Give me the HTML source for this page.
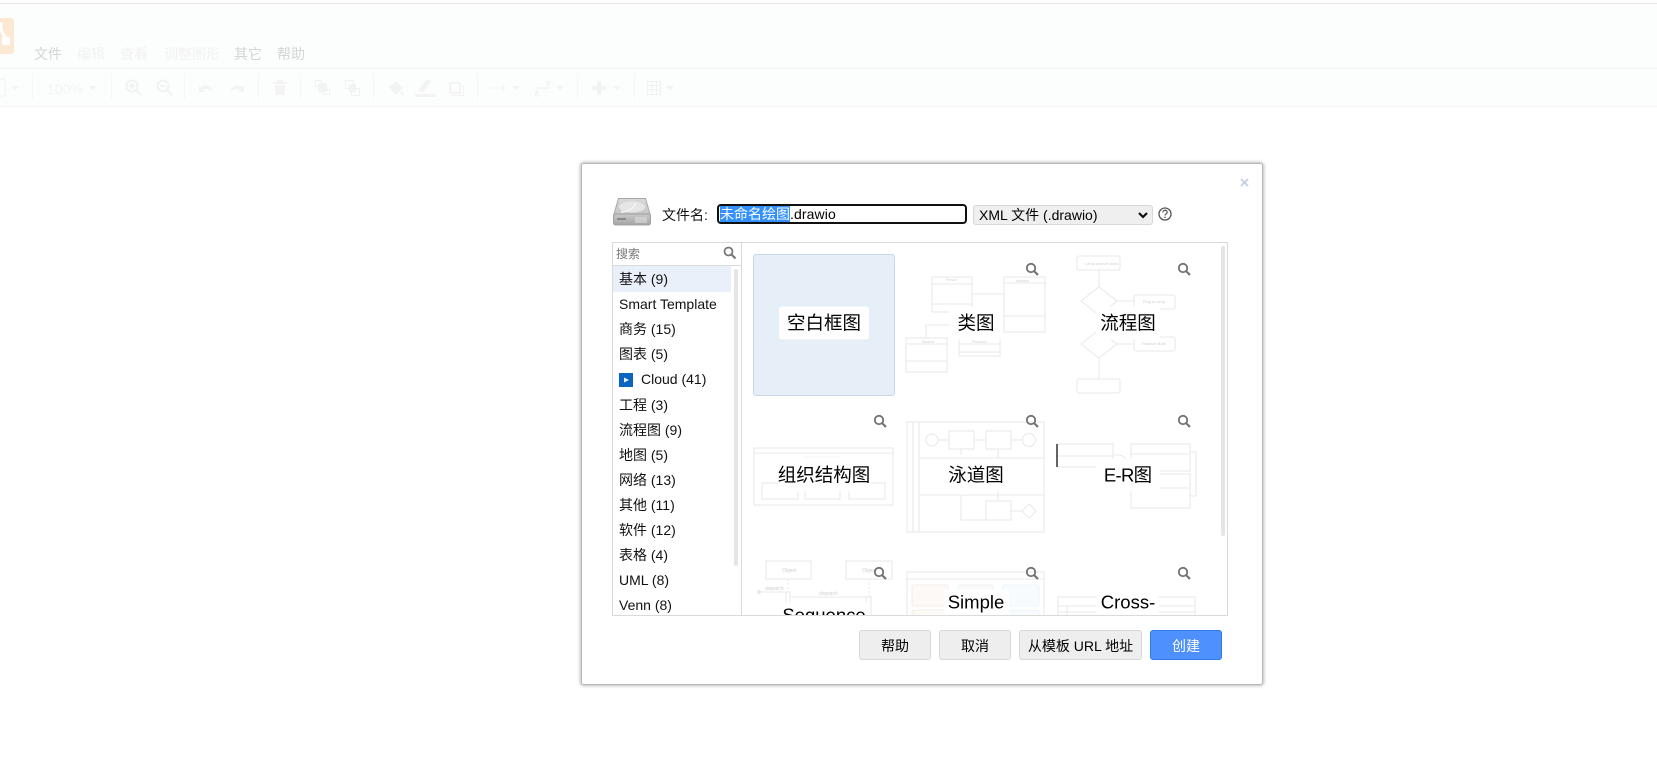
<!DOCTYPE html>
<html><head><meta charset="utf-8"><style>
*{box-sizing:border-box}
html,body{margin:0;padding:0;width:1657px;height:772px;overflow:hidden;background:#fff;font-family:"Liberation Sans","Noto Sans CJK SC",sans-serif;color:#000}
.a{position:absolute;white-space:nowrap}
.m{top:45px;font-size:14px;line-height:18px}
.sep{position:absolute;top:74px;width:1px;height:26px;background:#f6f7f6}
.r{position:absolute;left:619px;font-size:14px;line-height:20px;white-space:nowrap;color:#111}
.l{position:absolute;transform:translate(-50%,-50%);font-size:18.5px;line-height:25px;padding:4px 8px;background:#fff;border-radius:3px;white-space:nowrap;text-align:center}
.b{position:absolute;top:630px;height:30px;background:#eee;border:1px solid #d8d8d8;border-radius:3px;font-size:14px;line-height:30px;text-align:center;white-space:nowrap}
svg{position:absolute;overflow:visible}
</style></head><body>
<div class="a" style="left:0;top:3px;width:1657px;height:1px;background:#e8e8e8"></div>
<div class="a" style="left:0;top:4px;width:1657px;height:102px;background:#fcfefd"></div>
<div class="a" style="left:0;top:68px;width:1657px;height:1px;background:#f4f5f4"></div>
<div class="a" style="left:0;top:106px;width:1657px;height:1px;background:#f4f5f4"></div>
<svg style="left:0;top:0" width="20" height="60"><rect x="-8" y="18" width="22" height="36" rx="3" fill="#fde8d4"/><path d="M-1 24h2v6l5 9" stroke="#fff" stroke-width="3" fill="none"/><rect x="2" y="37" width="8" height="8" rx="1.500" fill="#fff"/></svg>
<div class="a m" style="left:34px;color:#d4d4d4">文件</div>
<div class="a m" style="left:77px;color:#f1f1f1">编辑</div>
<div class="a m" style="left:120px;color:#f1f1f1">查看</div>
<div class="a m" style="left:164px;color:#f1f1f1">调整图形</div>
<div class="a m" style="left:234px;color:#d4d4d4">其它</div>
<div class="a m" style="left:277px;color:#d4d4d4">帮助</div>
<div class="sep" style="left:32px"></div><div class="sep" style="left:111px"></div><div class="sep" style="left:184px"></div><div class="sep" style="left:258px"></div><div class="sep" style="left:300px"></div><div class="sep" style="left:373px"></div><div class="sep" style="left:477px"></div><div class="sep" style="left:577px"></div><div class="sep" style="left:634px"></div>
<div class="a" style="left:47px;top:80px;font-size:14px;line-height:18px;color:#f3f3f3">100%</div>
<svg style="left:0;top:68px" width="700" height="38" fill="#f2f3f2" stroke="none">
<rect x="-6" y="11" width="11" height="17" fill="none" stroke="#f0f0f0"/>
<path d="M11 18h8l-4 4zM89 18h8l-4 4zM512 18h8l-4 4zM556 18h8l-4 4zM613 18h8l-4 4zM666 18h8l-4 4z"/>
<g fill="none" stroke="#f1f2f1" stroke-width="2"><circle cx="132" cy="18" r="5.500"/><path d="M136 22l5 5M129 18h6M132 15v6"/><circle cx="163" cy="18" r="5.500"/><path d="M167 22l5 5M160 18h6"/></g>
<path d="M199 18v6h6l-2-2c3-2 7-1 10 2c-1-5-7-9-12-5zM244 18v6h-6l2-2c-3-2-7-1-10 2c1-5 7-9 12-5z"/>
<path d="M273 14h14v2h-14zM277 12h6v2h-6zM275 17h10v10h-10z"/>
<path d="M318 15h9v9h-9z"/><path d="M315.500 12.500h6v6h-6zM323.500 21.500h6v5h-6z" fill="none" stroke="#f0f1f0"/>
<path d="M345.500 12.500h8v8h-8zM351.500 20.500h8v7h-8z" fill="none" stroke="#f0f1f0"/><path d="M349 16h7v8h-7z"/>
<path d="M389 19l7-6l7 7l-7 7zM391 12l4 4M402 23c2 2 2 4 0 4c-2 0-2-2 0-4z"/>
<path d="M419 21l8-10l4 3l-8 10h-4zM415 26h21v3h-21z"/>
<path d="M449 14h12v12h-12zM451 16v8h8v-8zM463 17v10h-11v1h12v-11z"/>
<path d="M491 19.500h12v1h-12zM502 17l4 3l-4 3z"/>
<path d="M537 25v-5h11v-5" fill="none" stroke="#f0f1f0" stroke-width="1.200"/><rect x="535.500" y="25.500" width="2.500" height="2.500" fill="#fcfefd" stroke="#f0f1f0"/><rect x="547" y="13.500" width="2.500" height="2.500" fill="#fcfefd" stroke="#f0f1f0"/>
<path d="M597 13h4v5h5v4h-5v5h-4v-5h-5v-4h5z"/>
<g fill="none" stroke="#f0f1f0"><path d="M647.500 13.500h13v13h-13zM647.500 17.500h13M647.500 22h13M652 13.500v13M656.500 13.500v13"/></g>
</svg>

<!-- dialog -->
<div class="a" style="left:581px;top:163px;width:682px;height:522px;background:#fff;border:1px solid #b8b8b8;border-radius:3px;box-shadow:0 0 3px 1px rgba(0,0,0,.26)"></div>
<svg style="left:1240px;top:178px" width="9" height="9"><path d="M1 1l7 7M8 1l-7 7" stroke="#c3cfe3" stroke-width="1.800"/></svg>
<svg style="left:612px;top:197px" width="40" height="30"><defs><linearGradient id="g1" x1="0" y1="0" x2="0" y2="1"><stop offset="0" stop-color="#dadada"/><stop offset="1" stop-color="#c4c4c4"/></linearGradient><linearGradient id="g2" x1="0" y1="0" x2="0" y2="1"><stop offset="0" stop-color="#c9c9c9"/><stop offset="1" stop-color="#a4a4a4"/></linearGradient></defs>
<path d="M6.500 1.500h27l5 17H1.500z" fill="url(#g1)" stroke="#a8a8a8"/><ellipse cx="20" cy="10" rx="13" ry="5.500" fill="#e6e6e6"/><path d="M9 15c7 0 13-4 15-9" fill="none" stroke="#f4f4f4" stroke-width="1.500"/><rect x="1.500" y="17" width="37" height="11" rx="2" fill="url(#g2)" stroke="#a0a0a0"/><path d="M5 21h9v2H5z" fill="#8a8a8a"/><path d="M24 20v6M26 20v6M28 20v6M30 20v6M32 20v6M34 20v6" stroke="#e4e4e4"/></svg>
<div class="a" style="left:662px;top:206px;font-size:14px;line-height:18px;color:#111">文件名:</div>
<div class="a" style="left:717px;top:204px;width:250px;height:20px;border:2px solid #101010;border-radius:4px;background:#fff"></div>
<div class="a" style="left:720px;top:206px;height:16px;font-size:14px;line-height:16px"><span style="background:#3390ff;color:#fff;display:inline-block;height:16px">未命名绘图</span><span style="letter-spacing:.1px">.drawio</span></div>
<div class="a" style="left:973px;top:205px;width:180px;height:20px;background:#efefef;border:1px solid #d8d8d8;border-radius:3px;font-size:14px;line-height:18px;padding-left:5px">XML 文件 (.drawio)</div>
<svg style="left:1137px;top:211px" width="12" height="9"><path d="M2 2l4 4l4-4" fill="none" stroke="#111" stroke-width="2.200"/></svg>
<svg style="left:1157px;top:206px" width="16" height="16"><circle cx="8" cy="8" r="6" fill="none" stroke="#555" stroke-width="1.300"/><path d="M5.800 6.500c0-3 4.400-3 4.400-.2c0 1.700-2.200 1.600-2.200 3.200" fill="none" stroke="#555" stroke-width="1.200"/><circle cx="8" cy="11.300" r=".8" fill="#555"/></svg>

<!-- panel -->
<div class="a" style="left:612px;top:242px;width:616px;height:374px;border:1px solid #dadada;background:#fff"></div>
<div class="a" style="left:741px;top:243px;width:1px;height:372px;background:#dadada"></div>
<div class="a" style="left:613px;top:265px;width:128px;height:1px;background:#dadada"></div>
<div class="a" style="left:616px;top:246px;font-size:12px;line-height:16px;color:#777">搜索</div>
<svg style="left:723px;top:246px" width="14" height="14"><circle cx="5.500" cy="5.500" r="4" fill="none" stroke="#777" stroke-width="1.800"/><path d="M8.500 8.500l4 4" stroke="#777" stroke-width="2.200"/></svg>
<div class="a" style="left:613px;top:266px;width:118px;height:26px;background:#e9f0f9"></div>
<div class="a" style="left:734px;top:269px;width:4px;height:297px;background:#e5e5e5;border-radius:2px"></div>
<div class="a" style="left:613px;top:266px;width:128px;height:349px;overflow:hidden">
<div style="position:absolute;left:-613px;top:-266px;width:800px;height:700px">
<div class="r" style="top:269px">基本 (9)</div>
<div class="r" style="top:294px">Smart Template</div>
<div class="r" style="top:319px">商务 (15)</div>
<div class="r" style="top:344px">图表 (5)</div>
<div class="r" style="top:369px;left:641px">Cloud (41)</div>
<div class="r" style="top:395px">工程 (3)</div>
<div class="r" style="top:420px">流程图 (9)</div>
<div class="r" style="top:445px">地图 (5)</div>
<div class="r" style="top:470px">网络 (13)</div>
<div class="r" style="top:495px">其他 (11)</div>
<div class="r" style="top:520px">软件 (12)</div>
<div class="r" style="top:545px">表格 (4)</div>
<div class="r" style="top:570px">UML (8)</div>
<div class="r" style="top:595px">Venn (8)</div>
</div></div>
<svg style="left:619px;top:373px" width="14" height="14"><rect width="14" height="14" fill="#0a64c0"/><path d="M5 4.500l5 2.500l-5 2.500z" fill="#e8f0fa"/></svg>
<div class="a" style="left:1221px;top:246px;width:4px;height:290px;background:#e5e5e5;border-radius:2px"></div>

<div class="a" style="left:742px;top:243px;width:478px;height:372px;overflow:hidden">
<div style="position:absolute;left:-742px;top:-243px;width:1657px;height:772px">
<div class="a" style="left:753px;top:254px;width:142px;height:142px;background:#e6eef8;border:1px solid #c9d7ea;border-radius:3px"></div>
<svg style="left:0;top:0" width="1657" height="772" fill="none" stroke="#e9e9e9" stroke-width="1.100">
<!-- class -->
<rect x="932" y="277" width="40" height="35"/><path d="M932 284h40M932 304h40M972 294h32"/>
<rect x="906" y="338" width="41" height="34"/><path d="M906 344h41M906 361h41M926 338v-13h30"/>
<rect x="959" y="338" width="41" height="18"/><path d="M959 344h41M959 352h41"/>
<rect x="1004" y="277" width="41" height="55"/><path d="M1004 283h41M1004 316h41"/>
<!-- flow -->
<rect x="1077" y="256" width="43" height="14" rx="2"/><path d="M1099 270v17M1099 287l18 14l-18 14l-18-14zM1117 301h17M1099 315v15M1099 330l18 14l-18 14l-18-14zM1117 344h17M1099 358v21"/>
<rect x="1134" y="295" width="41" height="14" rx="2"/><rect x="1134" y="337" width="41" height="14" rx="2"/><rect x="1077" y="379" width="43" height="14" rx="2"/>
<!-- org -->
<rect x="754" y="448" width="139" height="57"/><path d="M754 453h139"/><rect x="762" y="483" width="36" height="16"/><rect x="805" y="483" width="35" height="16"/><rect x="849" y="483" width="36" height="16"/><path d="M805 457h35v18h-35z" stroke="#f4f4f4"/>
<!-- swim -->
<rect x="907" y="422" width="137" height="110"/><path d="M913 422v110M919 422v110M919 458h125M919 495h125"/>
<circle cx="932" cy="440" r="6"/><path d="M938 440h11"/><rect x="949" y="431" width="25" height="18"/><path d="M974 440h12"/><rect x="986" y="431" width="25" height="18"/><path d="M1011 440h12"/><circle cx="1029" cy="440" r="6.500"/>
<path d="M998 449v52M961 449v6M961 495v25h25"/>
<rect x="986" y="501" width="25" height="19"/><path d="M1011 511h11M1029 504l7 7l-7 7l-7-7z"/>
<!-- er -->
<rect x="1057" y="444" width="56" height="23"/><path d="M1057 456h56M1113 455h6c6 0 6 6 12 6"/>
<rect x="1131" y="444" width="59" height="27"/><rect x="1131" y="474" width="59" height="34"/><path d="M1131 454h59M1131 488h59M1190 452h6v44h-6"/>
<!-- seq -->
<rect x="766" y="561" width="45" height="18"/><rect x="846" y="561" width="46" height="18"/><path d="M788 579v13M869 579v18" stroke-dasharray="2 2"/><path d="M759 592h27M790 597h76"/><rect x="786" y="592" width="4" height="24"/><rect x="866" y="597" width="5" height="24"/><circle cx="759" cy="592" r="1.500" fill="#e6e6e6"/>
<!-- simple -->
<rect x="907" y="572" width="137" height="70"/><path d="M907 579h137"/>
<rect x="912" y="585" width="36" height="21" rx="2" fill="#fdf9f7" stroke="#f6eeea"/><rect x="958" y="585" width="35" height="21" rx="2" fill="#fbfbfa" stroke="#f1f1f1"/><rect x="1003" y="585" width="36" height="21" rx="2" fill="#f8fbfd" stroke="#ebf4f9"/>
<rect x="912" y="610" width="36" height="21" rx="2" fill="#fdf9f7" stroke="#f6eeea"/><rect x="958" y="610" width="35" height="21" rx="2" fill="#fbfbfa" stroke="#f1f1f1"/><rect x="1003" y="610" width="36" height="21" rx="2" fill="#f8fbfd" stroke="#ebf4f9"/>
<!-- cross -->
<rect x="1058" y="597" width="137" height="60"/><path d="M1058 606h137M1067 606v50M1103 606v50M1058 612h137"/>
<!-- ER dark -->
<path d="M1057 444v23" stroke="#222" stroke-width="1.400"/>
</svg>
<svg style="left:0;top:0" width="1657" height="772" fill="#cfcfcf" font-family="Liberation Sans" font-size="3.500" stroke="none">
<text x="946" y="281">Person</text><text x="922" y="343">Student</text><text x="972" y="343">Professor</text><text x="1016" y="282">Address</text>
<text x="1085" y="265" font-size="4">Lamp doesn't work</text><text x="1143" y="303" font-size="4">Plug in lamp</text><text x="1142" y="345" font-size="4">Replace Bulb</text>
<text x="782" y="572" font-size="5">Object</text><text x="862" y="572" font-size="5">Object</text><text x="765" y="590" font-size="5">dispatch</text><text x="819" y="595" font-size="5">dispatch</text>
</svg>
<div class="l" style="left:824px;top:323px">空白框图</div>
<div class="l" style="left:976px;top:323px">类图</div>
<div class="l" style="left:1128px;top:323px;padding:4px 4px">流程图</div>
<div class="l" style="left:824px;top:475px;padding:4px 0">组织结构图</div>
<div class="l" style="left:976px;top:475px;padding:4px 4px">泳道图</div>
<div class="l" style="left:1128px;top:475px"><span style="letter-spacing:-.7px">E-R</span>图</div>
<div class="l" style="left:824px;top:615px;padding:0 4px">Sequence</div>
<div class="l" style="left:976px;top:602px;padding:0 4px">Simple</div>
<div class="l" style="left:1128px;top:602px;padding:0 4px">Cross-</div>
<svg style="left:0;top:0" width="1657" height="772" fill="none" stroke="#727272">
<g stroke-width="1.800"><circle cx="1031" cy="268" r="4.200"/><path d="M1034 271l4 4" stroke-width="2.200"/>
<circle cx="1183" cy="268" r="4.200"/><path d="M1186 271l4 4" stroke-width="2.200"/>
<circle cx="879" cy="420" r="4.200"/><path d="M882 423l4 4" stroke-width="2.200"/>
<circle cx="1031" cy="420" r="4.200"/><path d="M1034 423l4 4" stroke-width="2.200"/>
<circle cx="1183" cy="420" r="4.200"/><path d="M1186 423l4 4" stroke-width="2.200"/>
<circle cx="879" cy="572" r="4.200"/><path d="M882 575l4 4" stroke-width="2.200"/>
<circle cx="1031" cy="572" r="4.200"/><path d="M1034 575l4 4" stroke-width="2.200"/>
<circle cx="1183" cy="572" r="4.200"/><path d="M1186 575l4 4" stroke-width="2.200"/></g>
</svg>
</div></div>

<div class="b" style="left:859px;width:72px">帮助</div>
<div class="b" style="left:939px;width:72px">取消</div>
<div class="b" style="left:1019px;width:123px">从模板 URL 地址</div>
<div class="b" style="left:1150px;width:72px;background:#4d90fe;border-color:#3079ed;color:#fff">创建</div>
</body></html>
